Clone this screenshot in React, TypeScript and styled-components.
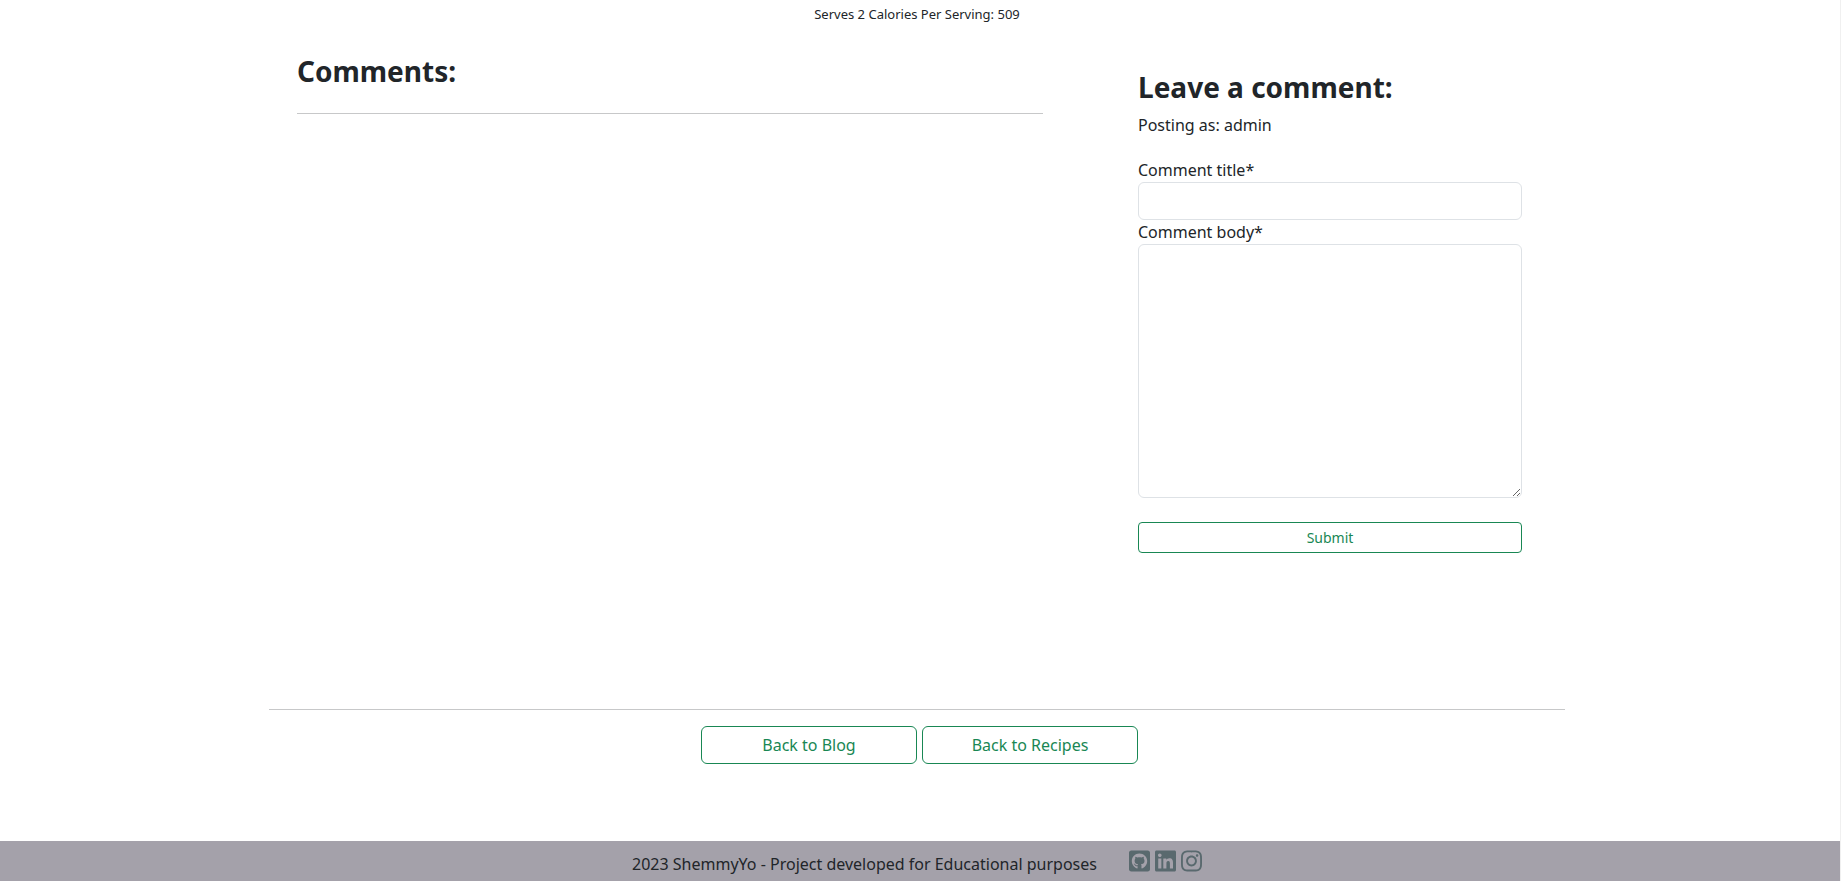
import React from "react";
import styled, { createGlobalStyle } from "styled-components";

const GlobalStyle = createGlobalStyle`
  *, *::before, *::after { box-sizing: border-box; }
  html { background: #fff; }
  body {
    margin: 0;
    color: #212529;
    font-family: "Noto Sans", "Open Sans", sans-serif;
    font-size: 16px;
    line-height: 24px;
  }
  h2, p { margin: 0; }
`;

const Page = styled.div`
  min-height: 100vh;
  display: flex;
  flex-direction: column;
  border-right: 1px solid #f0f0f0;
`;

const Main = styled.main`
  flex: 1;
  width: 100%;
  max-width: 1320px;
  margin: 0 auto;
  padding: 0 15px 0 9px;
`;

const Serving = styled.p`
  padding-top: 4px;
  font-size: 13px;
  line-height: 20px;
  text-align: center;
`;

const Columns = styled.div`
  display: flex;
  justify-content: space-between;
  padding: 26px 43px 0 28px;
`;

const CommentList = styled.section`
  flex: 0 1 746px;
`;

const CommentPanel = styled.section`
  flex: 0 1 384px;
  padding-top: 16px;
`;

const Heading = styled.h2`
  font-size: 28px;
  font-weight: 700;
  line-height: 42px;
`;

const Author = styled.p`
  padding-top: 5px;
`;

const Rule = styled.hr`
  margin: ${(p: { $gap: number }) => p.$gap}px 0 0;
  border: 0;
  border-top: 1px solid #c7c8c9;
`;

const Form = styled.form`
  display: flex;
  flex-direction: column;
  padding-top: 21px;
`;

const fieldLook = `
  display: block;
  width: 100%;
  padding: 6px 12px;
  border: 1px solid #dee2e6;
  border-radius: 6px;
  background: #fff;
  color: inherit;
  font: inherit;
`;

const TextInput = styled.input`
  ${fieldLook}
  height: 38px;
`;

const TextArea = styled.textarea`
  ${fieldLook}
  height: 254px;
  resize: vertical;
`;

const SubmitButton = styled.button`
  margin-top: 24px;
  padding: 4px 8px;
  border: 1px solid #198754;
  border-radius: 4px;
  background: transparent;
  color: #198754;
  font: inherit;
  font-size: 14px;
  line-height: 21px;
`;

const Actions = styled.nav`
  display: flex;
  justify-content: center;
  gap: 5px;
  padding: 16px 0 48px 5px;
`;

const ActionLink = styled.a`
  width: 216px;
  padding: 6px 12px;
  border: 1px solid #198754;
  border-radius: 6px;
  color: #198754;
  text-align: center;
  text-decoration: none;
`;

const Footer = styled.footer`
  display: flex;
  justify-content: center;
  padding: 8px 6px 5px 0;
  background: #a4a1aa;
`;

const FooterText = styled.p`
  padding-top: 3px;
`;

const Socials = styled.div`
  display: flex;
  gap: 5px;
  height: 24px;
  padding-left: 32px;
`;

const SocialLink = styled.a`
  display: block;
  height: 24px;
  color: #59696e;
`;

const Icon = styled.svg`
  display: block;
  width: 21px;
  height: 24px;
  fill: currentColor;
`;

const socials = [
  {
    name: "GitHub",
    path: "M400 32H48C21.500 32 0 53.500 0 80v352c0 26.500 21.500 48 48 48h352c26.500 0 48-21.500 48-48V80c0-26.500-21.500-48-48-48zM277.300 415.700c-8.400 1.500-11.500-3.700-11.500-8 0-5.400.2-33 .2-55.300 0-15.600-5.200-25.500-11.300-30.700 37-4.100 76-9.200 76-73.100 0-18.200-6.500-27.300-17.100-39 1.700-4.300 7.400-22-1.700-45-13.900-4.300-45.700 17.900-45.700 17.900-13.200-3.700-27.500-5.600-41.600-5.600-14.100 0-28.400 1.900-41.600 5.600 0 0-31.800-22.200-45.700-17.900-9.100 22.900-3.500 40.600-1.700 45-10.600 11.700-15.600 20.800-15.600 39 0 63.600 37.300 69 74.300 73.100-4.800 4.300-9.100 11.700-10.600 22.300-9.500 4.300-33.800 11.700-48.300-13.900-9.100-15.800-25.500-17.100-25.500-17.100-16.200-.2-1.100 10.200-1.100 10.200 10.800 5 18.400 24.200 18.400 24.200 9.700 29.700 56.100 19.700 56.100 19.700 0 13.900.2 36.500.2 40.600 0 4.300-3 9.500-11.500 8-66-22.100-112.200-84.900-112.200-158.300 0-91.800 70.200-161.500 162-161.500S388 165.600 388 257.400c.1 73.400-44.700 136.300-110.700 158.300z",
  },
  {
    name: "LinkedIn",
    path: "M416 32H31.900C14.300 32 0 46.500 0 64.300v383.400C0 465.500 14.300 480 31.900 480H416c17.600 0 32-14.500 32-32.300V64.300c0-17.800-14.400-32.300-32-32.300zM135.400 416H69V202.200h66.500V416zm-33.200-243c-21.300 0-38.500-17.300-38.500-38.500S80.900 96 102.200 96c21.200 0 38.500 17.300 38.500 38.500 0 21.300-17.200 38.500-38.500 38.500zm282.100 243h-66.400V312c0-24.800-.5-56.700-34.500-56.700-34.600 0-39.900 27-39.900 54.900V416h-66.400V202.200h63.700v29.200h.9c8.900-16.800 30.600-34.500 62.900-34.500 67.200 0 79.700 44.300 79.700 101.900V416z",
  },
  {
    name: "Instagram",
    path: "M224.100 141c-63.600 0-114.900 51.300-114.900 114.900s51.300 114.900 114.900 114.900S339 319.500 339 255.900 287.700 141 224.100 141zm0 189.600c-41.100 0-74.700-33.500-74.700-74.700s33.500-74.700 74.700-74.700 74.700 33.500 74.700 74.700-33.600 74.700-74.700 74.700zm146.400-194.300c0 14.900-12 26.800-26.800 26.800-14.900 0-26.800-12-26.800-26.800s12-26.800 26.800-26.800 26.800 12 26.800 26.800zm76.100 27.200c-1.700-35.900-9.900-67.700-36.200-93.900-26.200-26.200-58-34.400-93.900-36.200-37-2.100-147.900-2.100-184.900 0-35.800 1.700-67.600 9.900-93.900 36.100s-34.400 58-36.200 93.900c-2.100 37-2.100 147.900 0 184.900 1.700 35.900 9.900 67.700 36.200 93.900s58 34.400 93.900 36.200c37 2.100 147.900 2.100 184.900 0 35.900-1.700 67.700-9.900 93.900-36.200 26.200-26.200 34.400-58 36.200-93.900 2.100-37 2.100-147.800 0-184.800zM398.800 388c-7.800 19.600-22.900 34.700-42.600 42.600-29.500 11.700-99.500 9-132.100 9s-102.700 2.600-132.100-9c-19.600-7.800-34.700-22.900-42.600-42.600-11.700-29.500-9-99.500-9-132.100s-2.600-102.700 9-132.100c7.800-19.600 22.900-34.700 42.600-42.600 29.500-11.700 99.500-9 132.100-9s102.700-2.600 132.100 9c19.600 7.800 34.700 22.900 42.600 42.600 11.700 29.500 9 99.500 9 132.100s2.700 102.700-9 132.100z",
  },
];

export default function App() {
  return (
    <>
      <GlobalStyle />
      <Page>
        <Main>
          <Serving>Serves 2 Calories Per Serving: 509</Serving>
          <Columns>
            <CommentList>
              <Heading>Comments:</Heading>
              <Rule $gap={21} />
            </CommentList>
            <CommentPanel>
              <Heading>Leave a comment:</Heading>
              <Author>Posting as: admin</Author>
              <Form onSubmit={(e) => e.preventDefault()}>
                <label htmlFor="comment-title">Comment title*</label>
                <TextInput id="comment-title" type="text" required />
                <label htmlFor="comment-body">Comment body*</label>
                <TextArea id="comment-body" required />
                <SubmitButton type="submit">Submit</SubmitButton>
              </Form>
            </CommentPanel>
          </Columns>
          <Rule $gap={156} />
          <Actions>
            <ActionLink href="#blog">Back to Blog</ActionLink>
            <ActionLink href="#recipes">Back to Recipes</ActionLink>
          </Actions>
        </Main>
        <Footer>
          <FooterText>2023 ShemmyYo - Project developed for Educational purposes</FooterText>
          <Socials>
            {socials.map((s) => (
              <SocialLink key={s.name} href={`#${s.name.toLowerCase()}`} aria-label={s.name}>
                <Icon viewBox="0 0 448 512" aria-hidden="true">
                  <path d={s.path} />
                </Icon>
              </SocialLink>
            ))}
          </Socials>
        </Footer>
      </Page>
    </>
  );
}
